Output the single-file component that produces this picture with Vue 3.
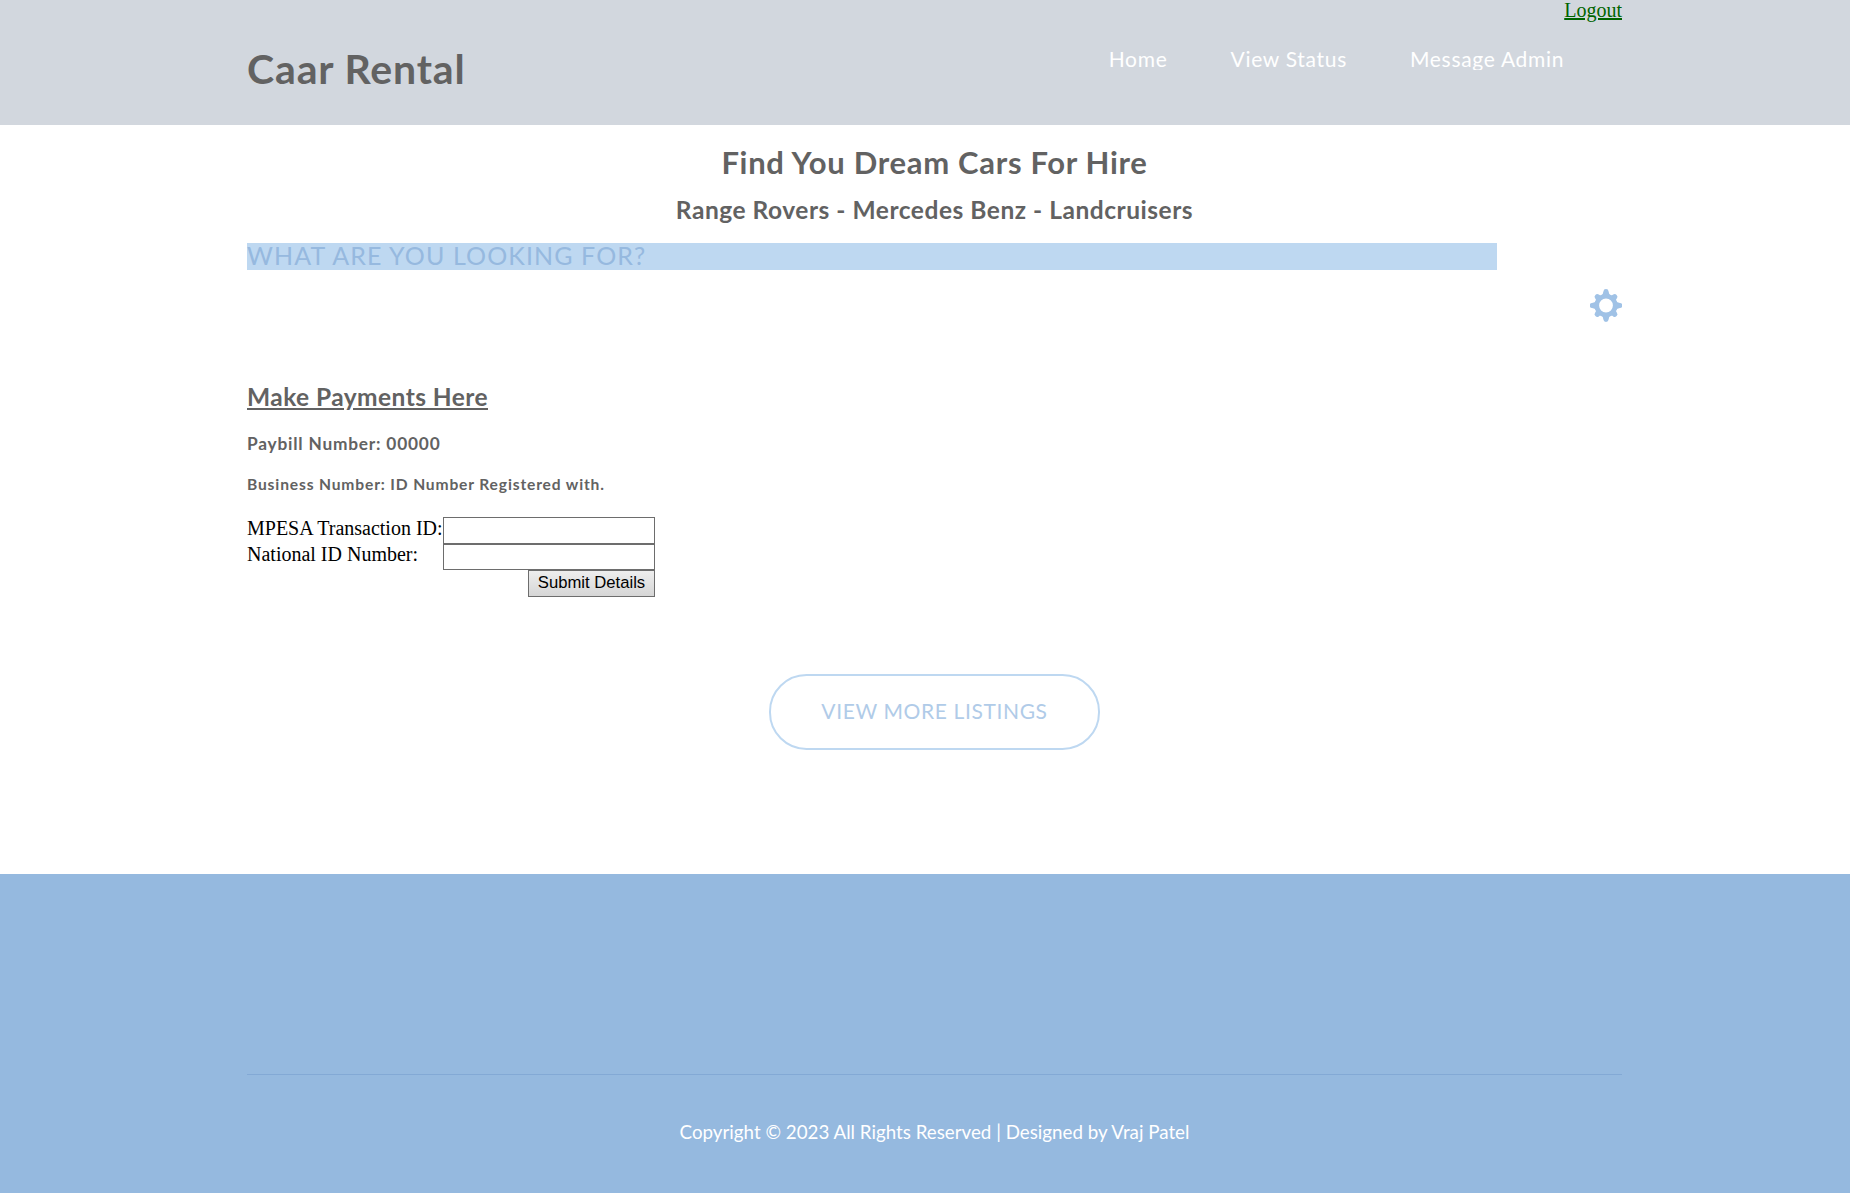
<script setup>
const links = ['Home', 'View Status', 'Message Admin']
const fields = ['MPESA Transaction ID:', 'National ID Number:']
const teeth = [0, 45, 90, 135, 180, 225, 270, 315]
</script>

<template>
  <div class="page">
    <header class="header">
      <div class="wrap head-row">
        <h1 class="logo">Caar Rental</h1>
        <nav class="nav">
          <a v-for="link in links" :key="link" class="nav-link">{{ link }}</a>
        </nav>
        <a class="logout">Logout</a>
      </div>
    </header>

    <main class="wrap">
      <section class="caption">
        <h2>Find You Dream Cars For Hire</h2>
        <h3>Range Rovers - Mercedes Benz - Landcruisers</h3>
      </section>

      <div class="search">WHAT ARE YOU LOOKING FOR?</div>
      <div class="gear-row">
        <svg class="gear" viewBox="-16 -16.5 32 33">
          <g fill="#a0c2e6">
            <path
              v-for="a in teeth"
              :key="a"
              :transform="`rotate(${a})`"
              :d="a % 90 ? 'M-4.4 -9.6 Q-2.6 -11 -2.6 -12.8 Q-2.4 -15 0 -15 Q2.4 -15 2.6 -12.8 Q2.6 -11 4.4 -9.6Z' : 'M-5 -9.6 Q-2.8 -11 -2.6 -14 Q-2.4 -16.4 0 -16.4 Q2.4 -16.4 2.6 -14 Q2.8 -11 5 -9.6Z'"
            />
          </g>
          <circle r="9.2" fill="none" stroke="#a0c2e6" stroke-width="4.6" />
        </svg>
      </div>

      <section class="payments">
        <h3 class="pay-title">Make Payments Here</h3>
        <h4>Paybill Number: 00000</h4>
        <h5>Business Number: ID Number Registered with.</h5>
        <form class="form" @submit.prevent>
          <template v-for="field in fields" :key="field">
            <label>{{ field }}</label>
            <input type="text" />
          </template>
          <button class="submit">Submit Details</button>
        </form>
      </section>

      <div class="more-row">
        <a class="more">VIEW MORE LISTINGS</a>
      </div>
    </main>

    <footer class="footer">
      <div class="wrap copyright">Copyright © 2023 All Rights Reserved | Designed by Vraj Patel</div>
    </footer>
  </div>
</template>

<style>
body {
  margin: 0;
  overflow: hidden;
}
</style>

<style scoped>
.page {
  width: 1869px;
  height: 1193px;
  display: flex;
  flex-direction: column;
  background: #fff;
  font-family: Lato, sans-serif;
}
.wrap {
  width: 1375px;
  margin: 0 auto;
  box-sizing: border-box;
}
h1, h2, h3, h4, h5 {
  margin: 0;
  font-weight: 700;
  color: #626262;
}
.header {
  height: 125px;
  flex: none;
  background: #d2d7de;
}
.head-row {
  display: flex;
  align-items: flex-start;
}
.logo {
  margin-top: 45px;
  font-size: 41px;
  line-height: 48px;
  letter-spacing: 0.85px;
}
.nav {
  display: flex;
  gap: 63px;
  margin: 49px 0 0 auto;
}
.nav-link {
  height: 21px;
  overflow: hidden;
  font-size: 21px;
  line-height: 20px;
  letter-spacing: 0.7px;
  color: #fff;
}
.logout {
  font: 20px/21px "Liberation Serif", serif;
  color: #006400;
  text-decoration: underline;
  text-decoration-thickness: 2px;
}
.caption {
  height: 118px;
  text-align: center;
}
.caption h2 {
  padding-top: 19px;
  font-size: 31px;
  line-height: 36px;
  letter-spacing: 0.69px;
}
.caption h3 {
  margin-top: 16px;
  font-size: 24.5px;
  line-height: 28px;
  letter-spacing: 0.53px;
}
.search {
  width: 1250px;
  height: 27px;
  background: #bed8f1;
  color: #96b9df;
  font-size: 25px;
  line-height: 25px;
  letter-spacing: 1.1px;
}
.gear-row {
  display: flex;
  justify-content: flex-end;
  padding-top: 19px;
}
.gear {
  width: 32px;
  height: 33px;
}
.payments {
  height: 291px;
  padding-top: 61px;
}
.pay-title {
  font-size: 24.5px;
  line-height: 28px;
  letter-spacing: 0.44px;
  text-decoration: underline;
}
h4 {
  margin-top: 23px;
  font-size: 17.3px;
  line-height: 20px;
  letter-spacing: 0.8px;
}
h5 {
  margin-top: 21px;
  font-size: 15.6px;
  line-height: 18px;
  letter-spacing: 0.85px;
}
.form {
  display: grid;
  grid-template-columns: 196px 212px;
  grid-template-rows: 27px 26px 27px;
  margin-top: 24px;
  font: 20px/23px "Liberation Serif", serif;
  color: #000;
}
label {
  white-space: nowrap;
}
label + input + label {
  margin-top: -1px;
}
input {
  box-sizing: border-box;
  width: 212px;
  height: 100%;
  margin: 0;
  padding: 0;
  border: 1px solid #6d6d6d;
  border-radius: 0;
  background: #fff;
  outline: none;
}
.submit {
  grid-column: 2;
  justify-self: end;
  box-sizing: border-box;
  width: 127px;
  height: 27px;
  padding: 0 0 1px;
  border: 1px solid #6d6d6d;
  border-radius: 0;
  background: linear-gradient(#eee, #d6d6d6);
  font: 16.67px/22px "Liberation Sans", sans-serif;
  color: #000;
}
.more-row {
  display: flex;
  justify-content: center;
}
.more {
  box-sizing: border-box;
  width: 331px;
  height: 76px;
  border: 2px solid #bed8f1;
  border-radius: 37.5px;
  text-align: center;
  font-size: 21px;
  line-height: 70px;
  letter-spacing: 0.62px;
  color: #b0cbe8;
}
.footer {
  height: 319px;
  margin-top: auto;
  flex: none;
  padding-top: 200px;
  box-sizing: border-box;
  background: #95b9df;
}
.copyright {
  border-top: 1px solid #83a9d5;
  padding-top: 45px;
  text-align: center;
  font-size: 18.75px;
  line-height: 23px;
  color: #fff;
}
</style>
